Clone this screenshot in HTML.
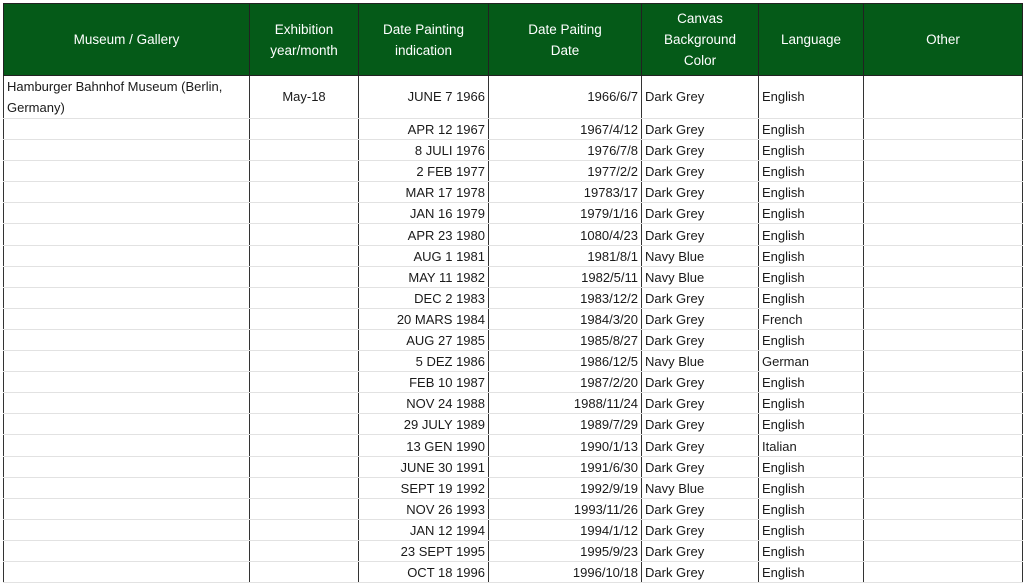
<!DOCTYPE html>
<html><head><style>
body{margin:0;width:1024px;height:582px;overflow:hidden;background:#fff;font-family:"Liberation Sans",sans-serif;font-size:13px;color:#1a1a1a}
table{position:absolute;left:3px;top:3px;border-collapse:collapse;table-layout:fixed}
td,th{padding:0 3px;white-space:nowrap;overflow:hidden;border-left:1px solid #333;border-right:1px solid #333}
th{background:#055a18;color:#fff;font-weight:normal;height:71px;border:1px solid #222;line-height:21px;font-size:13.5px}
td{height:20.1px;border-bottom:1px solid #e2e2e2;vertical-align:bottom;line-height:18px}
td.r{text-align:right}
td.c{text-align:center}
</style></head><body>
<table>
<colgroup><col style="width:246px"><col style="width:109px"><col style="width:130px"><col style="width:153px"><col style="width:117px"><col style="width:105px"><col style="width:159px"></colgroup>
<tr><th>Museum / Gallery</th><th>Exhibition<br>year/month</th><th>Date Painting<br>indication</th><th>Date Paiting<br>Date</th><th>Canvas<br>Background<br>Color</th><th>Language</th><th>Other</th></tr>
<tr><td style="height:42px;vertical-align:top;line-height:21px;white-space:normal">Hamburger Bahnhof Museum (Berlin, Germany)</td><td class="c" style="vertical-align:middle">May-18</td><td class="r" style="vertical-align:middle">JUNE 7 1966</td><td class="r" style="vertical-align:middle">1966/6/7</td><td style="vertical-align:middle">Dark Grey</td><td style="vertical-align:middle">English</td><td></td></tr>
<tr><td></td><td></td><td class="r">APR 12 1967</td><td class="r">1967/4/12</td><td>Dark Grey</td><td>English</td><td></td></tr>
<tr><td></td><td></td><td class="r">8 JULI 1976</td><td class="r">1976/7/8</td><td>Dark Grey</td><td>English</td><td></td></tr>
<tr><td></td><td></td><td class="r">2 FEB 1977</td><td class="r">1977/2/2</td><td>Dark Grey</td><td>English</td><td></td></tr>
<tr><td></td><td></td><td class="r">MAR 17 1978</td><td class="r">19783/17</td><td>Dark Grey</td><td>English</td><td></td></tr>
<tr><td></td><td></td><td class="r">JAN 16 1979</td><td class="r">1979/1/16</td><td>Dark Grey</td><td>English</td><td></td></tr>
<tr><td></td><td></td><td class="r">APR 23 1980</td><td class="r">1080/4/23</td><td>Dark Grey</td><td>English</td><td></td></tr>
<tr><td></td><td></td><td class="r">AUG 1 1981</td><td class="r">1981/8/1</td><td>Navy Blue</td><td>English</td><td></td></tr>
<tr><td></td><td></td><td class="r">MAY 11 1982</td><td class="r">1982/5/11</td><td>Navy Blue</td><td>English</td><td></td></tr>
<tr><td></td><td></td><td class="r">DEC 2 1983</td><td class="r">1983/12/2</td><td>Dark Grey</td><td>English</td><td></td></tr>
<tr><td></td><td></td><td class="r">20 MARS 1984</td><td class="r">1984/3/20</td><td>Dark Grey</td><td>French</td><td></td></tr>
<tr><td></td><td></td><td class="r">AUG 27 1985</td><td class="r">1985/8/27</td><td>Dark Grey</td><td>English</td><td></td></tr>
<tr><td></td><td></td><td class="r">5 DEZ 1986</td><td class="r">1986/12/5</td><td>Navy Blue</td><td>German</td><td></td></tr>
<tr><td></td><td></td><td class="r">FEB 10 1987</td><td class="r">1987/2/20</td><td>Dark Grey</td><td>English</td><td></td></tr>
<tr><td></td><td></td><td class="r">NOV 24 1988</td><td class="r">1988/11/24</td><td>Dark Grey</td><td>English</td><td></td></tr>
<tr><td></td><td></td><td class="r">29 JULY 1989</td><td class="r">1989/7/29</td><td>Dark Grey</td><td>English</td><td></td></tr>
<tr><td></td><td></td><td class="r">13 GEN 1990</td><td class="r">1990/1/13</td><td>Dark Grey</td><td>Italian</td><td></td></tr>
<tr><td></td><td></td><td class="r">JUNE 30 1991</td><td class="r">1991/6/30</td><td>Dark Grey</td><td>English</td><td></td></tr>
<tr><td></td><td></td><td class="r">SEPT 19 1992</td><td class="r">1992/9/19</td><td>Navy Blue</td><td>English</td><td></td></tr>
<tr><td></td><td></td><td class="r">NOV 26 1993</td><td class="r">1993/11/26</td><td>Dark Grey</td><td>English</td><td></td></tr>
<tr><td></td><td></td><td class="r">JAN 12 1994</td><td class="r">1994/1/12</td><td>Dark Grey</td><td>English</td><td></td></tr>
<tr><td></td><td></td><td class="r">23 SEPT 1995</td><td class="r">1995/9/23</td><td>Dark Grey</td><td>English</td><td></td></tr>
<tr><td></td><td></td><td class="r">OCT 18 1996</td><td class="r">1996/10/18</td><td>Dark Grey</td><td>English</td><td></td></tr>
</table>
</body></html>
